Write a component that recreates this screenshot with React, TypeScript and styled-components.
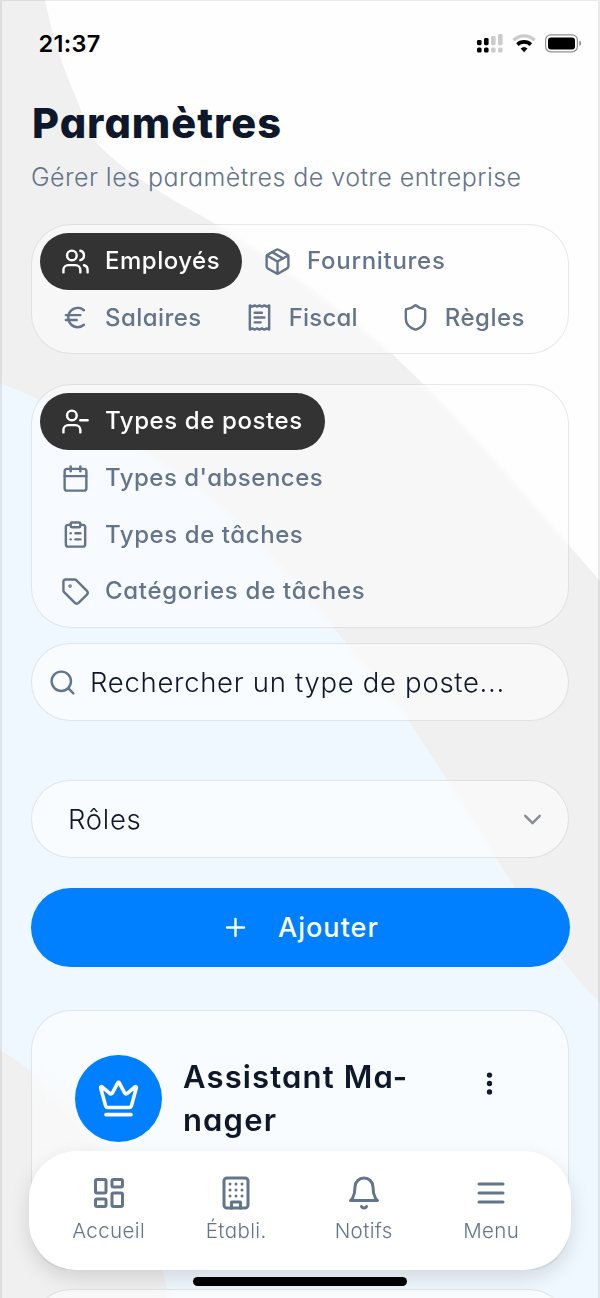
import React from 'react';
import styled, { createGlobalStyle } from 'styled-components';
import {
  Users, Package, Euro, Shield, UserMinus, Calendar, ClipboardList, Tag,
  Search, ChevronDown, Plus, Crown, EllipsisVertical, LayoutDashboard,
} from 'lucide-react';

const slate = '#64748b';
const ink = '#0f172a';

const GlobalStyle = createGlobalStyle`
  *, *::before, *::after { box-sizing: border-box; }
  body { margin: 0; background: #fefefe; }
  button { font: inherit; letter-spacing: inherit; border: 0; background: none; padding: 0; }
`;

const Screen = styled.div`
  position: relative;
  height: 1298px;
  overflow: hidden;
  background: #fefefe;
  color: ${ink};
  font-family: Inter, sans-serif;
  font-feature-settings: 'cv11';
  isolation: isolate;
  &::after {
    content: '';
    position: absolute;
    inset: 0;
    border: solid rgba(0, 0, 0, 0.08);
    border-width: 1px 2px 0;
    pointer-events: none;
  }
`;

const Backdrop = styled.svg`
  position: absolute;
  inset: 0;
  z-index: -1;
`;

const StatusBar = styled.header`
  display: flex;
  justify-content: space-between;
  align-items: center;
  height: 86px;
  padding: 0 19px 0 38.5px;
`;

const Time = styled.span`
  color: #000;
  font-size: 23.5px;
  font-weight: 600;
  font-feature-settings: normal;
  letter-spacing: 0.3px;
`;

const Content = styled.main`
  display: flex;
  flex-direction: column;
  padding: 0 31px;
`;

const Title = styled.h1`
  margin: 12px 0 0 1px;
  font-size: 41.5px;
  line-height: 50px;
  font-weight: 800;
  letter-spacing: 1px;
`;

const Subtitle = styled.p`
  margin: 13px 0 0;
  font-size: 25px;
  line-height: 32px;
  font-weight: 300;
  letter-spacing: 0.45px;
  color: ${slate};
  white-space: nowrap;
`;

const Panel = styled.section<{ $top: number }>`
  display: flex;
  flex-wrap: wrap;
  margin-top: ${(p) => p.$top}px;
  padding: 8px 8px 7px;
  border: 1px solid rgba(0, 0, 0, 0.09);
  border-radius: 40px;
  background: rgba(255, 255, 255, 0.47);
  backdrop-filter: blur(2px);
`;

const SideList = styled(Panel)`
  flex-direction: column;
  flex-wrap: nowrap;
  align-items: flex-start;
`;

const Tab = styled.button<{ $active?: boolean; $tracking?: number }>`
  display: flex;
  align-items: center;
  gap: 15px;
  height: 56.6px;
  padding: 0 22px 0 21px;
  border-radius: 29px;
  font-size: 24px;
  line-height: 32px;
  font-weight: 500;
  letter-spacing: ${(p) => p.$tracking ?? 0.6}px;
  white-space: nowrap;
  color: ${(p) => (p.$active ? '#fff' : slate)};
  background: ${(p) => (p.$active ? '#333' : 'transparent')};
`;

const Field = styled.div<{ $top: number; $left: number }>`
  display: flex;
  align-items: center;
  height: 78px;
  margin-top: ${(p) => p.$top}px;
  padding: 0 21px 0 ${(p) => p.$left}px;
  border: 1px solid rgba(0, 0, 0, 0.09);
  border-radius: 39px;
  background: rgba(255, 255, 255, 0.5);
  backdrop-filter: blur(2px);
  font-size: 27.5px;
  font-weight: 300;
  letter-spacing: 0.7px;
  white-space: nowrap;
`;

const FieldText = styled.span<{ $left?: number }>`
  flex: 1;
  margin-left: ${(p) => p.$left ?? 0}px;
`;

const AddButton = styled.button`
  display: flex;
  align-items: center;
  justify-content: center;
  gap: 28px;
  height: 79px;
  margin: 29.5px -0.5px 0;
  padding-top: 1px;
  border-radius: 40px;
  background: #007fff;
  color: #fff;
  font-size: 27px;
  font-weight: 500;
  letter-spacing: 1.05px;
`;

const RoleCard = styled.article`
  display: flex;
  align-items: flex-start;
  height: 260px;
  margin-top: 43.5px;
  padding: 43.5px 64px 0 43px;
  border: 1px solid rgba(0, 0, 0, 0.09);
  border-radius: 40px;
  background: rgba(255, 255, 255, 0.5);
  backdrop-filter: blur(10px);
`;

const NextCard = styled(RoleCard)`
  margin-top: 19px;
`;

const Avatar = styled.div`
  display: grid;
  place-items: center;
  width: 87px;
  height: 87px;
  border-radius: 50%;
  background: #007fff;
  color: #fff;
`;

const RoleName = styled.h2`
  flex: 1;
  margin: 0 0 0 21px;
  font-size: 31px;
  line-height: 43px;
  font-weight: 600;
  letter-spacing: 1.15px;
`;

const MoreButton = styled.button`
  margin-top: 14px;
  color: ${ink};
  line-height: 0;
`;

const BottomNav = styled.nav`
  position: absolute;
  left: 29px;
  right: 29px;
  top: 1151px;
  height: 118.5px;
  display: grid;
  grid-template-columns: repeat(4, 1fr);
  padding: 0 16px;
  border-radius: 48px;
  background: #fff;
  box-shadow: 0 8px 20px rgba(0, 0, 0, 0.13);
`;

const NavItem = styled.a`
  display: flex;
  flex-direction: column;
  align-items: center;
  padding-top: 24px;
  gap: 7px;
  color: ${slate};
  font-size: 20.5px;
  line-height: 26px;
  font-weight: 300;
  letter-spacing: 0.4px;
`;

const HomeIndicator = styled.div`
  position: absolute;
  left: 193px;
  top: 1277px;
  width: 214px;
  height: 8.5px;
  border-radius: 5px;
  background: #000;
`;

const OutlineIcon = styled.svg.attrs<{ size?: number | string }>((p) => ({
  width: p.size,
  height: p.size,
  viewBox: '0 0 24 24',
  fill: 'none',
  stroke: 'currentColor',
  strokeWidth: 2,
  strokeLinecap: 'round',
  strokeLinejoin: 'round',
}))<{ size?: number | string }>``;

type IconProps = { size?: number | string };

const ReceiptIcon = ({ size }: IconProps) => (
  <OutlineIcon size={size}>
    <path d="M4 2v20l2-1 2 1 2-1 2 1 2-1 2 1 2-1 2 1V2l-2 1-2-1-2 1-2-1-2 1-2-1-2 1Z" />
    <path d="M14 8H8M16 12H8M13 16H8" />
  </OutlineIcon>
);

const BuildingIcon = ({ size }: IconProps) => (
  <OutlineIcon size={size}>
    <rect x="4" y="2" width="16" height="20" rx="2" />
    <path d="M9 22v-4h6v4M8 6h.01M16 6h.01M12 6h.01M12 10h.01M12 14h.01M16 10h.01M16 14h.01M8 10h.01M8 14h.01" />
  </OutlineIcon>
);

const BellIcon = ({ size }: IconProps) => (
  <OutlineIcon size={size}>
    <path d="M6 8a6 6 0 0 1 12 0c0 7 3 9 3 9H3s3-2 3-9" />
    <path d="M10.3 21a1.94 1.94 0 0 0 3.4 0" />
  </OutlineIcon>
);

const MenuIcon = ({ size }: IconProps) => (
  <OutlineIcon size={size}>
    <path d="M4 6h16M4 12h16M4 18h16" />
  </OutlineIcon>
);

const tabs = [
  { label: 'Employés', Icon: Users, tracking: 0.5 },
  { label: 'Fournitures', Icon: Package, tracking: 0.7 },
  { label: 'Salaires', Icon: Euro, tracking: 0.45 },
  { label: 'Fiscal', Icon: ReceiptIcon, tracking: 0.2 },
  { label: 'Règles', Icon: Shield, tracking: 0.5 },
];

const sections = [
  { label: 'Types de postes', Icon: UserMinus, tracking: 0.6 },
  { label: "Types d'absences", Icon: Calendar, tracking: 0.5 },
  { label: 'Types de tâches', Icon: ClipboardList, tracking: 0.58 },
  { label: 'Catégories de tâches', Icon: Tag, tracking: 0.7 },
];

const navItems = [
  { label: 'Accueil', Icon: LayoutDashboard },
  { label: 'Établi.', Icon: BuildingIcon },
  { label: 'Notifs', Icon: BellIcon },
  { label: 'Menu', Icon: MenuIcon },
];

const StatusIcons = () => (
  <svg width="105" height="20" viewBox="476 33 105 20">
    <g fill="#000">
      <rect x="477" y="40" width="4.6" height="5.2" rx="1.4" />
      <rect x="484" y="38" width="4.6" height="7.2" rx="1.4" />
      <rect x="477" y="47.5" width="4.6" height="5" rx="1.6" />
      <rect x="484" y="47.5" width="4.6" height="5" rx="1.6" />
    </g>
    <g fill="#ccc">
      <rect x="491" y="36" width="4.6" height="9.2" rx="1.4" />
      <rect x="498" y="34" width="4.6" height="11.2" rx="1.4" />
      <rect x="491" y="47.5" width="4.6" height="5" rx="1.6" />
      <rect x="498" y="47.5" width="4.6" height="5" rx="1.6" />
    </g>
    <path d="M513.6 40.2a15 15 0 0 1 21 0" fill="none" stroke="#ccc" strokeWidth="3.4" />
    <path d="M517.4 44.6a9.6 9.6 0 0 1 13.4 0" fill="none" stroke="#000" strokeWidth="3.6" />
    <path d="M520.7 48.6a5 5 0 0 1 6.8 0l-3.4 3.6z" fill="#000" />
    <rect x="545.6" y="34.8" width="31.8" height="17" rx="5.2" fill="none" stroke="#8f8f8f" strokeWidth="1.2" />
    <rect x="548" y="37.4" width="27" height="12" rx="3" fill="#000" />
    <path d="M579.2 40.8v5q2.4-.8 2.4-2.5t-2.4-2.5z" fill="#8f8f8f" />
  </svg>
);

export default function App() {
  return (
    <Screen>
      <GlobalStyle />
      <Backdrop width="600" height="1298" viewBox="0 0 600 1298">
        <path
          d="M0 0H45C51 30 61 62 72 88C80 106 86 127 97 143C120 169 165 196 200 215C265 253 330 301 390 352C460 417 525 495 600 581V1298H0Z"
          fill="#f0f0f0"
        />
        <path
          d="M0 383C80 416 160 452 230 516C292 577 340 634 401 710C435 760 475 824 513 885C540 930 565 969 600 1003V1298H168C160 1235 125 1170 82 1118C58 1091 30 1068 0 1050Z"
          fill="#f0f8ff"
        />
      </Backdrop>
      <StatusBar>
        <Time>21:37</Time>
        <StatusIcons />
      </StatusBar>
      <Content>
        <Title>Paramètres</Title>
        <Subtitle>Gérer les paramètres de votre entreprise</Subtitle>
        <Panel $top={31}>
          {tabs.map(({ label, Icon, tracking }, i) => (
            <Tab key={label} $active={i === 0} $tracking={tracking}>
              <Icon size={29} />
              {label}
            </Tab>
          ))}
        </Panel>
        <SideList $top={30}>
          {sections.map(({ label, Icon, tracking }, i) => (
            <Tab key={label} $active={i === 0} $tracking={tracking}>
              <Icon size={29} />
              {label}
            </Tab>
          ))}
        </SideList>
        <Field $top={15.5} $left={16}>
          <Search size={29} color={slate} />
          <FieldText $left={13}>Rechercher un type de poste...</FieldText>
        </Field>
        <Field $top={59} $left={36}>
          <FieldText>Rôles</FieldText>
          <ChevronDown size={29} color="#888c92" />
        </Field>
        <AddButton>
          <Plus size={29} />
          Ajouter
        </AddButton>
        <RoleCard>
          <Avatar>
            <Crown size={43} />
          </Avatar>
          <RoleName>
            Assistant Ma-
            <br />
            nager
          </RoleName>
          <MoreButton>
            <EllipsisVertical size={29} strokeWidth={2.4} />
          </MoreButton>
        </RoleCard>
        <NextCard />
      </Content>
      <BottomNav>
        {navItems.map(({ label, Icon }) => (
          <NavItem key={label}>
            <Icon size={36} />
            {label}
          </NavItem>
        ))}
      </BottomNav>
      <HomeIndicator />
    </Screen>
  );
}
